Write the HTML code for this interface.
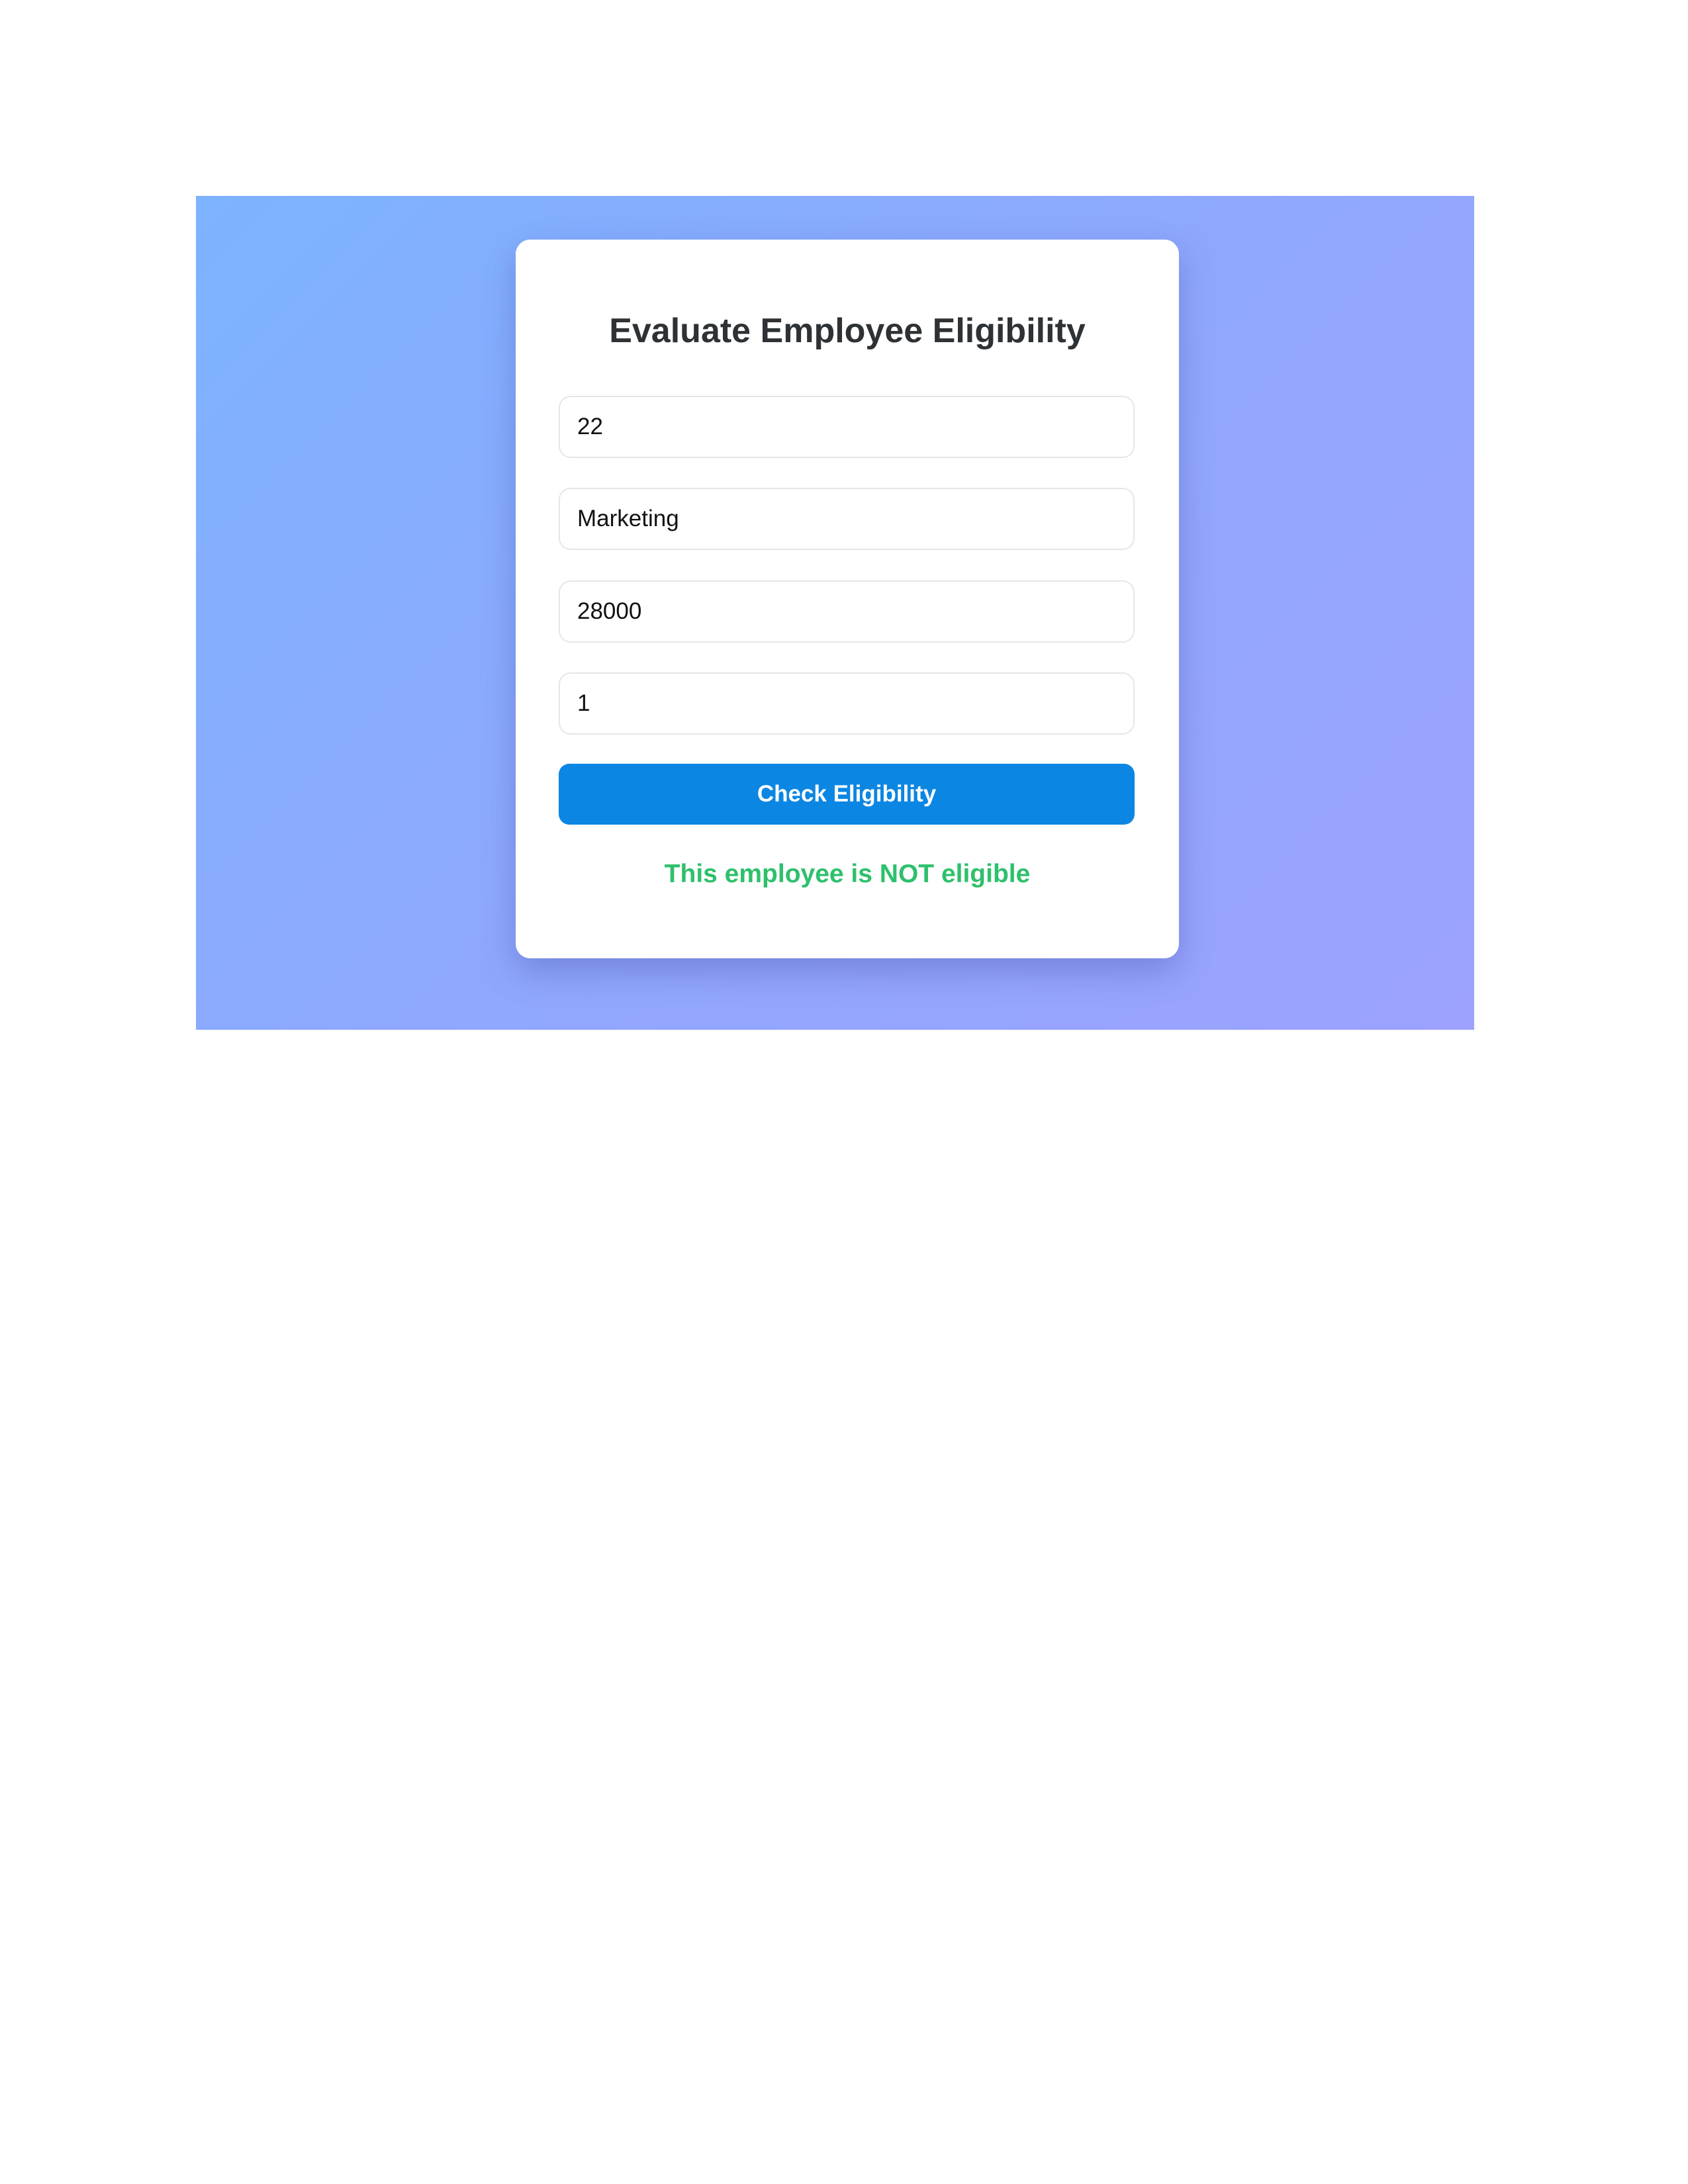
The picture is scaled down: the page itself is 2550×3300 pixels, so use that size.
<!DOCTYPE html>
<html><head><meta charset="utf-8"><style>
html,body{margin:0;padding:0;background:#fff;}
body{width:2550px;height:3300px;position:relative;font-family:"Liberation Sans",Arial,sans-serif;overflow:hidden;}
.bg{position:absolute;left:296px;top:296px;width:1931px;height:1260px;background:linear-gradient(135deg,#7db3ff 0%,#8fa8fd 50%,#9ca2fd 100%);}
.card{position:absolute;left:779px;top:362px;width:1002px;height:1086px;background:#fff;border-radius:22px;box-shadow:0 20px 50px rgba(60,70,160,0.35);}
h1{position:absolute;margin:0;text-align:center;font-size:52px;font-weight:bold;color:#2e3235;line-height:76px;transform:translateY(-100%);}
.in{position:absolute;left:844px;width:866px;height:90px;border:2px solid #e6e6e6;border-radius:18px;background:#fff;font-size:35px;color:#111;line-height:90px;box-sizing:content-box;}
.in span{position:absolute;left:26px;}
.btn{position:absolute;left:844px;top:1154px;width:870px;height:92px;background:#0b86e3;border-radius:16px;color:#fff;font-weight:bold;font-size:35px;text-align:center;line-height:92px;}
.res{position:absolute;left:779px;width:1002px;top:1296px;text-align:center;font-weight:bold;font-size:39px;line-height:50px;color:#2ec06c;}
</style></head><body>
<div class="bg"></div>
<div class="card"></div>
<h1 style="left:779px;width:1002px;top:538px;">Evaluate Employee Eligibility</h1>
<div class="in" style="top:598px"><span>22</span></div>
<div class="in" style="top:737px"><span>Marketing</span></div>
<div class="in" style="top:877px"><span>28000</span></div>
<div class="in" style="top:1016px"><span>1</span></div>
<div class="btn">Check Eligibility</div>
<div class="res">This employee is NOT eligible</div>
</body></html>
